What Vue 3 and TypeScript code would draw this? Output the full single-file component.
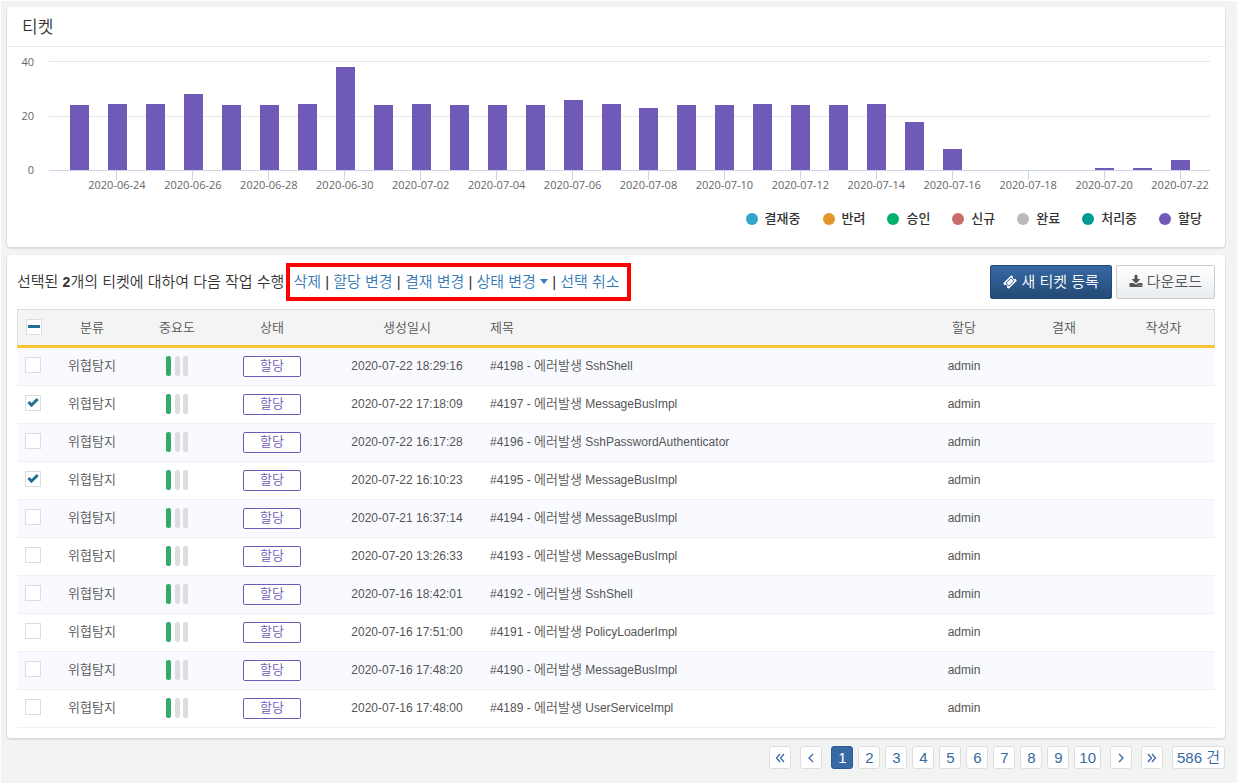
<script setup lang="ts">
import { ref, computed } from 'vue'

interface Ticket {
  id: number
  created: string
  source: string
  checked: boolean
}

const yTicks = [40, 20, 0]
const yMax = 40

const values = [
  23.7, 24.4, 24.4, 27.8, 23.7, 23.7, 24.4, 37.8, 23.7, 24.4, 23.7, 23.7, 23.7, 25.6, 24.4,
  22.6, 23.7, 23.7, 24.4, 23.7, 23.7, 24.4, 17.8, 7.8, 0, 0, 0, 0.7, 0.7, 3.7,
]

const days = values.map((value, i) => {
  const date = new Date(Date.UTC(2020, 5, 23 + i)).toISOString().slice(0, 10)
  return { date, value, labelled: i % 2 === 1 }
})

const legend = [
  { name: '결재중', cls: 'blue' },
  { name: '반려', cls: 'orange' },
  { name: '승인', cls: 'green' },
  { name: '신규', cls: 'red' },
  { name: '완료', cls: 'gray' },
  { name: '처리중', cls: 'teal' },
  { name: '할당', cls: 'purple' },
]

const tickets = ref<Ticket[]>([
  { id: 4198, created: '2020-07-22 18:29:16', source: 'SshShell', checked: false },
  { id: 4197, created: '2020-07-22 17:18:09', source: 'MessageBusImpl', checked: true },
  { id: 4196, created: '2020-07-22 16:17:28', source: 'SshPasswordAuthenticator', checked: false },
  { id: 4195, created: '2020-07-22 16:10:23', source: 'MessageBusImpl', checked: true },
  { id: 4194, created: '2020-07-21 16:37:14', source: 'MessageBusImpl', checked: false },
  { id: 4193, created: '2020-07-20 13:26:33', source: 'MessageBusImpl', checked: false },
  { id: 4192, created: '2020-07-16 18:42:01', source: 'SshShell', checked: false },
  { id: 4191, created: '2020-07-16 17:51:00', source: 'PolicyLoaderImpl', checked: false },
  { id: 4190, created: '2020-07-16 17:48:20', source: 'MessageBusImpl', checked: false },
  { id: 4189, created: '2020-07-16 17:48:00', source: 'UserServiceImpl', checked: false },
])

const selectedCount = computed(() => tickets.value.filter((t) => t.checked).length)
const allSelected = computed(() => selectedCount.value === tickets.value.length)
const someSelected = computed(() => selectedCount.value > 0 && !allSelected.value)

function setAll(checked: boolean) {
  tickets.value.forEach((t) => (t.checked = checked))
}

const page = ref(1)
const total = 586
</script>

<template>
  <div class="page">
    <section class="card chart-card">
      <h1 class="card-title">티켓</h1>
      <div class="chart">
        <div class="y-axis">
          <span v-for="t in yTicks" :key="t">{{ t }}</span>
        </div>
        <div class="plot-area">
          <div class="plot">
            <div v-for="d in days" :key="d.date" class="slot">
              <div class="bar" :style="{ height: (d.value / yMax) * 100 + '%' }"></div>
            </div>
          </div>
          <div class="x-axis">
            <div v-for="d in days" :key="d.date" class="x-slot" :class="{ tick: d.labelled }">
              <span v-if="d.labelled">{{ d.date }}</span>
            </div>
          </div>
        </div>
      </div>
      <ul class="legend">
        <li v-for="l in legend" :key="l.name"><i class="dot" :class="l.cls"></i>{{ l.name }}</li>
      </ul>
    </section>

    <section class="card list-card">
      <div class="toolbar">
        <div class="bulk">
          <span class="message">선택된 <b>{{ selectedCount }}</b>개의 티켓에 대하여 다음 작업 수행</span>
          <span class="actions">
            <a href="#">삭제</a> | <a href="#">할당 변경</a> | <a href="#">결재 변경</a> |
            <a href="#">상태 변경 <svg class="caret" viewBox="0 0 8 5"><path d="M0 0h8L4 5z" /></svg></a> |
            <a href="#" @click.prevent="setAll(false)">선택 취소</a>
          </span>
        </div>
        <div class="buttons">
          <button type="button" class="btn primary">
            <svg viewBox="0 0 1792 1792" width="15" height="15">
              <path
                fill-rule="evenodd"
                d="M1024 452l316 316-572 572-316-316zM813 1429l616-616q19-19 19-45t-19-45l-360-360q-18-18-45-18t-45 18l-616 616q-19 19-19 45t19 45l360 360q18 18 45 18t45-18zM1702 794l-907 908q-37 37-90.500 37t-90.500-37l-126-126q56-56 56-136t-56-136-136-56-136 56l-125-126q-37-37-37-90.500t37-90.500l907-906q37-37 90.500-37t90.500 37l125 125q-56 56-56 136t56 136 136 56 136-56l126 125q37 37 37 90.500t-37 90.500z"
              />
            </svg>
            새 티켓 등록
          </button>
          <button type="button" class="btn">
            <svg viewBox="0 0 1792 1792" width="15" height="15">
              <path
                d="M1344 1344q0-26-19-45t-45-19-45 19-19 45 19 45 45 19 45-19 19-45zm256 0q0-26-19-45t-45-19-45 19-19 45 19 45 45 19 45-19 19-45zm128-224v320q0 40-28 68t-68 28h-1472q-40 0-68-28t-28-68v-320q0-40 28-68t68-28h465l135 136q58 56 136 56t136-56l136-136h464q40 0 68 28t28 68zm-325-569q17 41-14 70l-448 448q-18 19-45 19t-45-19l-448-448q-31-29-14-70 17-39 59-39h256v-448q0-26 19-45t45-19h256q26 0 45 19t19 45v448h256q42 0 59 39z"
                fill-rule="evenodd"
              />
            </svg>
            다운로드
          </button>
        </div>
      </div>

      <table class="tickets">
        <colgroup>
          <col class="c-check" />
          <col class="c-kind" />
          <col class="c-level" />
          <col class="c-state" />
          <col class="c-date" />
          <col />
          <col class="c-user" />
          <col class="c-user" />
          <col class="c-user" />
        </colgroup>
        <thead>
          <tr>
            <th>
              <input
                type="checkbox"
                aria-label="전체 선택"
                :checked="allSelected"
                :indeterminate="someSelected"
                @change="setAll(($event.target as HTMLInputElement).checked)"
              />
            </th>
            <th>분류</th>
            <th>중요도</th>
            <th>상태</th>
            <th>생성일시</th>
            <th class="left">제목</th>
            <th>할당</th>
            <th>결재</th>
            <th>작성자</th>
          </tr>
        </thead>
        <tbody>
          <tr v-for="t in tickets" :key="t.id">
            <td><input v-model="t.checked" type="checkbox" :aria-label="'#' + t.id" /></td>
            <td><span class="ko">위협탐지</span></td>
            <td>
              <span class="level"><i class="on"></i><i></i><i></i></span>
            </td>
            <td><span class="state">할당</span></td>
            <td>{{ t.created }}</td>
            <td class="left">#{{ t.id }} - <span class="ko">에러발생</span> {{ t.source }}</td>
            <td>admin</td>
            <td></td>
            <td></td>
          </tr>
        </tbody>
      </table>
    </section>

    <nav class="pager">
      <button type="button" class="step" aria-label="처음" @click="page = 1">
        <svg viewBox="0 0 10 10"><path d="M5 1L1.500 5 5 9M9 1L5.500 5 9 9" /></svg>
      </button>
      <button type="button" class="step" aria-label="이전" @click="page = Math.max(1, page - 1)">
        <svg viewBox="0 0 10 10"><path d="M7 1L3 5l4 4" /></svg>
      </button>
      <div class="numbers">
        <button v-for="n in 10" :key="n" type="button" :class="{ current: n === page }" @click="page = n">
          {{ n }}
        </button>
      </div>
      <button type="button" class="step" aria-label="다음" @click="page = page + 1">
        <svg viewBox="0 0 10 10"><path d="M3 1l4 4-4 4" /></svg>
      </button>
      <button type="button" class="step" aria-label="마지막">
        <svg viewBox="0 0 10 10"><path d="M1 1l3.500 4L1 9M5 1l3.500 4L5 9" /></svg>
      </button>
      <button type="button">{{ total }} 건</button>
    </nav>
  </div>
</template>

<style>
body {
  margin: 0;
}
</style>

<style scoped>
.page {
  box-sizing: border-box;
  min-height: 100vh;
  padding: 6px 12px 14px 6px;
  border: 1px solid #fff;
  background: #f2f4f4;
  color: #333;
  font-family: 'Liberation Sans', 'Noto Sans CJK KR', sans-serif;
  font-size: 15px;
}

.card {
  border-radius: 4px;
  background: #fff;
  box-shadow: 0 1px 1px 1px rgba(0, 0, 0, 0.09);
}

.card-title {
  margin: 0;
  padding: 2px 15px 0;
  border-bottom: 1px solid #ebebeb;
  font-size: 17px;
  font-weight: 350;
  line-height: 37px;
}

.chart {
  display: flex;
  padding: 14px 15px 0 13px;
  font-family: 'Open Sans', sans-serif;
  font-size: 11px;
  color: #666;
}

.y-axis {
  display: flex;
  flex-direction: column;
  justify-content: space-between;
  width: 14px;
  height: 124px;
  margin: -7px 15px 0 0;
  line-height: 16px;
  text-align: right;
}

.plot-area {
  flex: 1;
  min-width: 0;
}

.plot {
  display: grid;
  grid-template-columns: repeat(30, 1fr);
  height: 109px;
  padding: 0 11px 0 12px;
  border-bottom: 1px solid #ccd6eb;
  background: repeating-linear-gradient(#e6e6e6 0 1px, transparent 1px 55px);
}

.slot {
  display: flex;
  align-items: flex-end;
  justify-content: center;
}

.bar {
  width: 50%;
  background: #6f5ab7;
}

.x-axis {
  display: grid;
  grid-template-columns: repeat(30, 1fr);
  height: 24px;
  padding: 0 11px;
}

.x-slot {
  display: flex;
  flex-direction: column;
  align-items: center;
  min-width: 0;
  line-height: 12px;
  white-space: nowrap;
}

.x-slot.tick::before {
  content: '';
  width: 1px;
  height: 9px;
  margin-bottom: -1px;
  background: #ccd6eb;
}

.legend {
  display: flex;
  justify-content: flex-end;
  gap: 22px;
  margin: 0;
  padding: 14px 23px 19px;
  list-style: none;
  font-size: 13px;
  font-weight: 500;
  line-height: 19px;
}

.legend li {
  display: flex;
  align-items: center;
  gap: 7px;
}

.dot {
  width: 12px;
  height: 12px;
  border-radius: 50%;
}

.blue { background: #31a5cb; }
.orange { background: #e09628; }
.green { background: #00b26a; }
.red { background: #c96c6c; }
.gray { background: #bababa; }
.teal { background: #009b95; }
.purple { background: #6f5ab7; }

.list-card {
  margin-top: 8px;
  padding: 8px 10px 10px;
}

.toolbar {
  display: flex;
  align-items: center;
  justify-content: space-between;
  height: 38px;
  margin-bottom: 8px;
}

.bulk {
  display: flex;
  align-items: center;
  font-weight: 350;
  white-space: nowrap;
}

.message {
  padding-bottom: 4px;
}

.message b {
  font-size: 14px;
}

.actions {
  box-sizing: border-box;
  height: 38px;
  margin-left: 2px;
  padding: 0 7px 0 3px;
  border: 4px solid #f00;
  line-height: 30px;
}

a {
  color: #337ab7;
  text-decoration: none;
}

.caret {
  width: 8px;
  height: 5px;
  fill: currentColor;
  vertical-align: 3px;
}

.buttons {
  display: flex;
  gap: 4px;
}

.btn {
  display: flex;
  align-items: center;
  gap: 4px;
  height: 34px;
  padding: 0 12px 3px;
  border: 1px solid #ccc;
  border-radius: 2px;
  background: linear-gradient(#fff, #e9ecf0);
  color: #555;
  font-family: inherit;
  font-size: 15px;
  font-weight: 350;
}

.btn svg {
  width: 14px;
  height: 14px;
  margin-top: 2px;
  fill: currentColor;
}

.btn.primary {
  border-color: #234a73;
  background: linear-gradient(#3769a5, #234a75);
  color: #fff;
}

.tickets {
  width: 100%;
  table-layout: fixed;
  border-collapse: separate;
  border-spacing: 0;
  color: #555;
  font-size: 12px;
}

.c-check { width: 32px; }
.c-kind { width: 86px; }
.c-level { width: 84px; }
.c-state { width: 106px; }
.c-date { width: 164px; }
.c-user { width: 100px; }

th {
  box-sizing: border-box;
  height: 39px;
  padding: 0 0 2px;
  border-top: 1px solid #ddd;
  border-bottom: 3px solid #fbc437;
  background: #f4f4f4;
  font-size: 13px;
  font-weight: 350;
}

th:first-child {
  border-left: 1px solid #ddd;
}

th:last-child {
  border-right: 1px solid #ddd;
}

td {
  box-sizing: border-box;
  height: 38px;
  padding: 0 0 2px;
  border-bottom: 1px solid #eff0f2;
  line-height: 18px;
  text-align: center;
}

th:nth-child(n + 7),
td:nth-child(n + 7) {
  padding-right: 2px;
}

.left {
  padding-left: 1px;
  text-align: left;
}

tbody tr:nth-child(odd) {
  background: #f9faff;
}

.ko {
  font-size: 13px;
  font-weight: 350;
}

input[type='checkbox'] {
  display: block;
  appearance: none;
  box-sizing: border-box;
  width: 16px;
  height: 16px;
  margin: 0 auto;
  border: 1px solid #ddd;
  background: #fff center / 14px 14px no-repeat;
}

td input[type='checkbox'] {
  margin-bottom: 2px;
}

input[type='checkbox']:checked {
  background-image: url("data:image/svg+xml,%3Csvg xmlns='http://www.w3.org/2000/svg' viewBox='0 0 14 14'%3E%3Cpath d='M2.500 6l3 3.200L11.700 3' fill='none' stroke='%23236f94' stroke-width='3'/%3E%3C/svg%3E");
}

input[type='checkbox']:indeterminate {
  background-image: linear-gradient(#236f94, #236f94);
  background-size: 12px 3px;
}

.level {
  display: flex;
  justify-content: center;
  gap: 3px;
}

.level i {
  width: 5px;
  height: 20px;
  border-radius: 2px;
  background: #ddd;
}

.level .on {
  margin-right: 1px;
  background: #34ab68;
}

.state {
  display: block;
  box-sizing: border-box;
  width: 58px;
  height: 21px;
  margin: 2px auto 0;
  border: 1px solid #6f5ab7;
  border-radius: 2px;
  background: #fff;
  color: #6f5ab7;
  font-size: 13px;
  font-weight: 350;
  line-height: 18px;
}

.pager {
  display: flex;
  justify-content: flex-end;
  gap: 9px;
  padding-top: 8px;
}

.numbers {
  display: flex;
  gap: 5px;
}

.pager button {
  display: flex;
  box-sizing: border-box;
  align-items: center;
  justify-content: center;
  min-width: 22px;
  height: 23px;
  padding: 0 4px;
  border: 1px solid #ddd;
  border-radius: 3px;
  background: #fff;
  color: #3769a5;
  font-family: inherit;
  font-size: 15px;
  font-weight: 350;
  line-height: 20px;
}

.pager button.current {
  border-color: #2c5a92;
  background: #3769a5;
  color: #fff;
}

.pager .step {
  padding: 0;
}

.pager svg {
  width: 10px;
  height: 10px;
  fill: none;
  stroke: currentColor;
  stroke-width: 1.3;
}
</style>
